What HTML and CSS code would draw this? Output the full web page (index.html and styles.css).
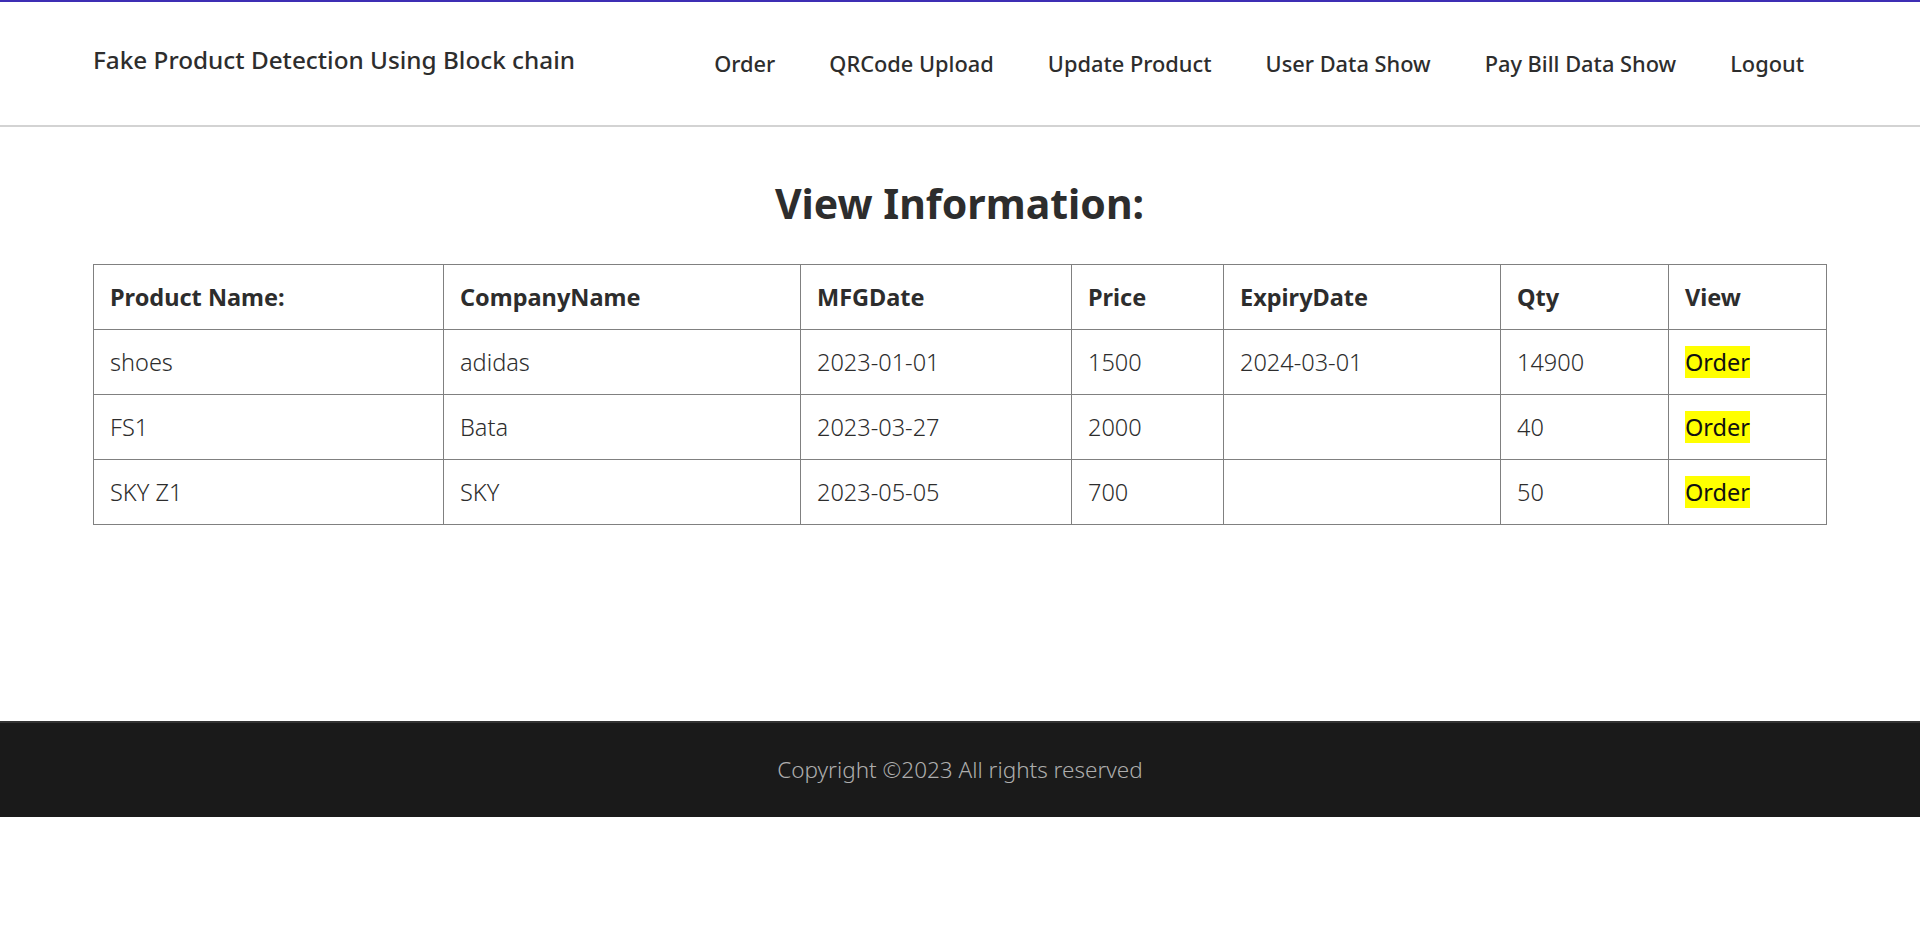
FILE: index.html
```html
<!DOCTYPE html>
<html lang="en">
<head>
<meta charset="utf-8">
<title>View Information</title>
<link rel="stylesheet" href="styles.css">
</head>
<body>
<header class="site-header">
  <div class="brand">Fake Product Detection Using Block chain</div>
  <nav class="nav">
    <a class="nav-link" href="#">Order</a>
    <a class="nav-link" href="#">QRCode Upload</a>
    <a class="nav-link" href="#">Update Product</a>
    <a class="nav-link" href="#">User Data Show</a>
    <a class="nav-link" href="#">Pay Bill Data Show</a>
    <a class="nav-link" href="#">Logout</a>
  </nav>
</header>
<main class="content">
  <h2 class="page-title">View Information:</h2>
  <table class="info-table">
    <colgroup>
      <col class="c1"><col class="c2"><col class="c3"><col class="c4"><col class="c5"><col class="c6"><col class="c7">
    </colgroup>
    <thead>
      <tr><th>Product Name:</th><th>CompanyName</th><th>MFGDate</th><th>Price</th><th>ExpiryDate</th><th>Qty</th><th>View</th></tr>
    </thead>
    <tbody>
      <tr><td>shoes</td><td>adidas</td><td>2023-01-01</td><td>1500</td><td>2024-03-01</td><td>14900</td><td><mark class="order">Order</mark></td></tr>
      <tr><td>FS1</td><td>Bata</td><td>2023-03-27</td><td>2000</td><td></td><td>40</td><td><mark class="order">Order</mark></td></tr>
      <tr><td>SKY Z1</td><td>SKY</td><td>2023-05-05</td><td>700</td><td></td><td>50</td><td><mark class="order">Order</mark></td></tr>
    </tbody>
  </table>
</main>
<footer class="site-footer">
  <p class="copy">Copyright ©2023 All rights reserved</p>
</footer>
</body>
</html>
```
FILE: styles.css
```css
* { box-sizing: border-box; }
html, body { margin: 0; padding: 0; }
body {
  font-family: "Noto Sans", "Open Sans", sans-serif;
  color: #2d2d2d;
  background: #fff;
  border-top: 2px solid #3d2eb4;
}
.site-header {
  height: 125px;
  border-bottom: 2px solid #d3d3d3;
  display: flex;
  justify-content: space-between;
  align-items: flex-start;
  padding: 0 89px 0 93px;
}
.brand {
  font-size: 24.3px;
  font-weight: 500;
  margin-top: 43px;
  line-height: 30px;
}
.nav {
  display: flex;
  margin-top: 47px;
}
.nav-link {
  font-size: 21.8px;
  font-weight: 500;
  color: #2d2d2d;
  text-decoration: none;
  padding: 0 27px;
  line-height: 30px;
}
.content {
  padding: 0 94px 0 93px;
}
.page-title {
  text-align: center;
  font-size: 41px;
  font-weight: 700;
  margin: 52px 0 0;
  line-height: 48px;
  height: 85px;
}
.info-table {
  width: 1733px;
  border-collapse: collapse;
  table-layout: fixed;
  font-size: 23.5px;
}
.c1 { width: 350px; }
.c2 { width: 357px; }
.c3 { width: 271px; }
.c4 { width: 152px; }
.c5 { width: 277px; }
.c6 { width: 168px; }
.c7 { width: 158px; }
.info-table th, .info-table td {
  border: 1px solid #808080;
  height: 65px;
  padding: 0 16px;
  text-align: left;
  vertical-align: middle;
}
.info-table th { font-weight: 700; }
.info-table td { font-weight: 300; }
.order {
  background: #ffff00;
  color: #111;
  font-weight: 400;
  padding: 0;
}
.site-footer {
  margin-top: 196px;
  border-top: 2px solid #333;
  background: #1a1a1a;
  height: 96px;
  display: flex;
  align-items: center;
  justify-content: center;
  padding-bottom: 2px;
}
.copy {
  margin: 0;
  color: #adadad;
  font-size: 22.5px;
  font-weight: 300;
}
```
